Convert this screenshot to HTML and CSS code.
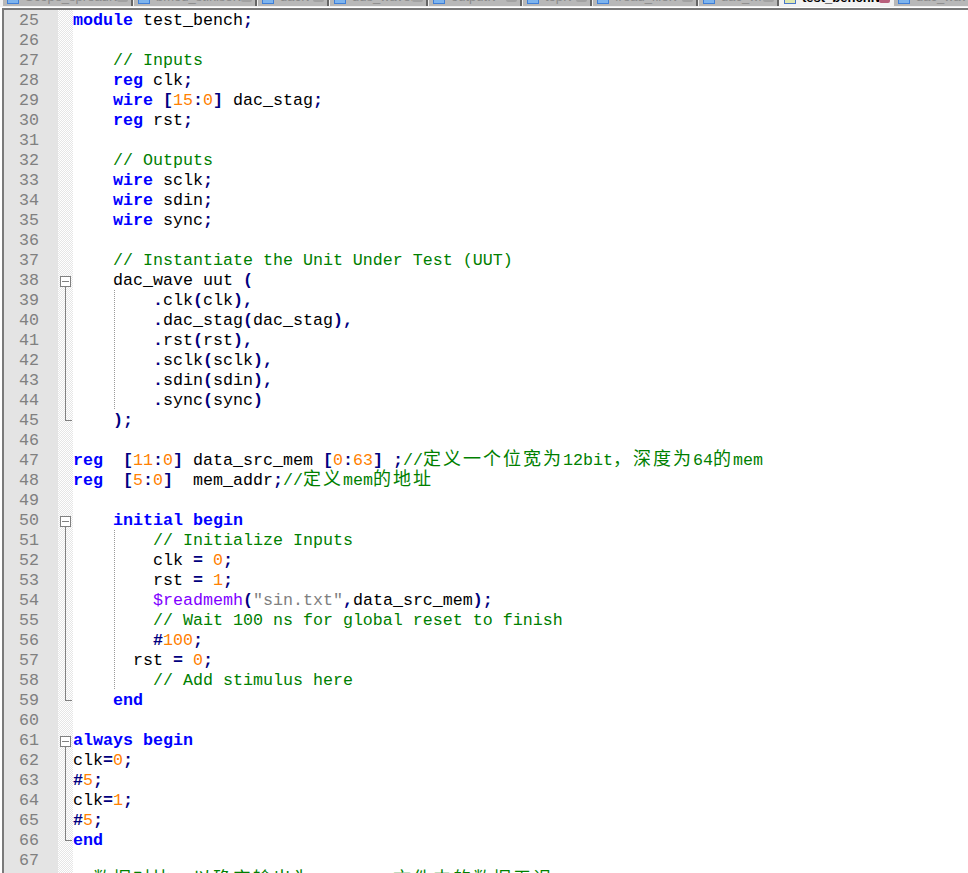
FILE: index.html
```html
<!DOCTYPE html>
<html lang="zh">
<head>
  <meta charset="UTF-8">
  <title>test_bench.v</title>
  <link rel="stylesheet" href="styles.css">
</head>
<body>
  <div class="tabs">
    <div class="tab"><i class="tab-icon"></i><span class="tab-name">Scope_spread.vhd</span><i class="tab-close"></i></div>
    <div class="tab"><i class="tab-icon"></i><span class="tab-name">bmod_st.xise.vhd</span><i class="tab-close"></i></div>
    <div class="tab"><i class="tab-icon"></i><span class="tab-name">dac.v</span><i class="tab-close"></i></div>
    <div class="tab"><i class="tab-icon"></i><span class="tab-name">dds_wave.v</span><i class="tab-close"></i></div>
    <div class="tab"><i class="tab-icon"></i><span class="tab-name">output.v</span><i class="tab-close"></i></div>
    <div class="tab"><i class="tab-icon"></i><span class="tab-name">top.v</span><i class="tab-close"></i></div>
    <div class="tab"><i class="tab-icon"></i><span class="tab-name">fread_file.v</span><i class="tab-close"></i></div>
    <div class="tab"><i class="tab-icon"></i><span class="tab-name">dac_wr.v</span><i class="tab-close"></i></div>
    <div class="tab active"><i class="tab-icon"></i><span class="tab-name">test_bench.v</span><i class="tab-close"></i></div>
    <div class="tab"><i class="tab-icon"></i><span class="tab-name">dac_wave.v</span></div>
  </div>

  <div class="editor">
    <div class="row"><span class="num">25</span><span class="fold"></span><span class="code"><b class="kw">module</b> test_bench<b class="op">;</b></span></div>
    <div class="row"><span class="num">26</span><span class="fold"></span><span class="code"></span></div>
    <div class="row"><span class="num">27</span><span class="fold"></span><span class="code">    <span class="cm">// Inputs</span></span></div>
    <div class="row"><span class="num">28</span><span class="fold"></span><span class="code">    <b class="kw">reg</b> clk<b class="op">;</b></span></div>
    <div class="row"><span class="num">29</span><span class="fold"></span><span class="code">    <b class="kw">wire</b> <b class="op">[</b><span class="n">15</span><b class="op">:</b><span class="n">0</span><b class="op">]</b> dac_stag<b class="op">;</b></span></div>
    <div class="row"><span class="num">30</span><span class="fold"></span><span class="code">    <b class="kw">reg</b> rst<b class="op">;</b></span></div>
    <div class="row"><span class="num">31</span><span class="fold"></span><span class="code"></span></div>
    <div class="row"><span class="num">32</span><span class="fold"></span><span class="code">    <span class="cm">// Outputs</span></span></div>
    <div class="row"><span class="num">33</span><span class="fold"></span><span class="code">    <b class="kw">wire</b> sclk<b class="op">;</b></span></div>
    <div class="row"><span class="num">34</span><span class="fold"></span><span class="code">    <b class="kw">wire</b> sdin<b class="op">;</b></span></div>
    <div class="row"><span class="num">35</span><span class="fold"></span><span class="code">    <b class="kw">wire</b> sync<b class="op">;</b></span></div>
    <div class="row"><span class="num">36</span><span class="fold"></span><span class="code"></span></div>
    <div class="row"><span class="num">37</span><span class="fold"></span><span class="code">    <span class="cm">// Instantiate the Unit Under Test (UUT)</span></span></div>
    <div class="row"><span class="num">38</span><span class="fold open"></span><span class="code">    dac_wave uut <b class="op">(</b></span></div>
    <div class="row"><span class="num">39</span><span class="fold line"></span><span class="code guide">        <b class="op">.</b>clk<b class="op">(</b>clk<b class="op">),</b></span></div>
    <div class="row"><span class="num">40</span><span class="fold line"></span><span class="code guide">        <b class="op">.</b>dac_stag<b class="op">(</b>dac_stag<b class="op">),</b></span></div>
    <div class="row"><span class="num">41</span><span class="fold line"></span><span class="code guide">        <b class="op">.</b>rst<b class="op">(</b>rst<b class="op">),</b></span></div>
    <div class="row"><span class="num">42</span><span class="fold line"></span><span class="code guide">        <b class="op">.</b>sclk<b class="op">(</b>sclk<b class="op">),</b></span></div>
    <div class="row"><span class="num">43</span><span class="fold line"></span><span class="code guide">        <b class="op">.</b>sdin<b class="op">(</b>sdin<b class="op">),</b></span></div>
    <div class="row"><span class="num">44</span><span class="fold line"></span><span class="code guide">        <b class="op">.</b>sync<b class="op">(</b>sync<b class="op">)</b></span></div>
    <div class="row"><span class="num">45</span><span class="fold close"></span><span class="code">    <b class="op">);</b></span></div>
    <div class="row"><span class="num">46</span><span class="fold"></span><span class="code"></span></div>
    <div class="row"><span class="num">47</span><span class="fold"></span><span class="code"><b class="kw">reg</b>  <b class="op">[</b><span class="n">11</span><b class="op">:</b><span class="n">0</span><b class="op">]</b> data_src_mem <b class="op">[</b><span class="n">0</span><b class="op">:</b><span class="n">63</span><b class="op">]</b> <b class="op">;</b><span class="cm">//<span class="zh">定义一个位宽为</span>12bit<span class="zh">，深度为</span>64<span class="zh">的</span>mem</span></span></div>
    <div class="row"><span class="num">48</span><span class="fold"></span><span class="code"><b class="kw">reg</b>  <b class="op">[</b><span class="n">5</span><b class="op">:</b><span class="n">0</span><b class="op">]</b>  mem_addr<b class="op">;</b><span class="cm">//<span class="zh">定义</span>mem<span class="zh">的地址</span></span></span></div>
    <div class="row"><span class="num">49</span><span class="fold"></span><span class="code"></span></div>
    <div class="row"><span class="num">50</span><span class="fold open"></span><span class="code">    <b class="kw">initial</b> <b class="kw">begin</b></span></div>
    <div class="row"><span class="num">51</span><span class="fold line"></span><span class="code guide">        <span class="cm">// Initialize Inputs</span></span></div>
    <div class="row"><span class="num">52</span><span class="fold line"></span><span class="code guide">        clk <b class="op">=</b> <span class="n">0</span><b class="op">;</b></span></div>
    <div class="row"><span class="num">53</span><span class="fold line"></span><span class="code guide">        rst <b class="op">=</b> <span class="n">1</span><b class="op">;</b></span></div>
    <div class="row"><span class="num">54</span><span class="fold line"></span><span class="code guide">        <span class="sys">$readmemh</span><b class="op">(</b><span class="str">"sin.txt"</span><b class="op">,</b>data_src_mem<b class="op">);</b></span></div>
    <div class="row"><span class="num">55</span><span class="fold line"></span><span class="code guide">        <span class="cm">// Wait 100 ns for global reset to finish</span></span></div>
    <div class="row"><span class="num">56</span><span class="fold line"></span><span class="code guide">        <b class="op">#</b><span class="n">100</span><b class="op">;</b></span></div>
    <div class="row"><span class="num">57</span><span class="fold line"></span><span class="code guide">      rst <b class="op">=</b> <span class="n">0</span><b class="op">;</b></span></div>
    <div class="row"><span class="num">58</span><span class="fold line"></span><span class="code guide">        <span class="cm">// Add stimulus here</span></span></div>
    <div class="row"><span class="num">59</span><span class="fold close"></span><span class="code">    <b class="kw">end</b></span></div>
    <div class="row"><span class="num">60</span><span class="fold"></span><span class="code"></span></div>
    <div class="row"><span class="num">61</span><span class="fold open"></span><span class="code"><b class="kw">always</b> <b class="kw">begin</b></span></div>
    <div class="row"><span class="num">62</span><span class="fold line"></span><span class="code">clk<b class="op">=</b><span class="n">0</span><b class="op">;</b></span></div>
    <div class="row"><span class="num">63</span><span class="fold line"></span><span class="code"><b class="op">#</b><span class="n">5</span><b class="op">;</b></span></div>
    <div class="row"><span class="num">64</span><span class="fold line"></span><span class="code">clk<b class="op">=</b><span class="n">1</span><b class="op">;</b></span></div>
    <div class="row"><span class="num">65</span><span class="fold line"></span><span class="code"><b class="op">#</b><span class="n">5</span><b class="op">;</b></span></div>
    <div class="row"><span class="num">66</span><span class="fold close"></span><span class="code"><b class="kw">end</b></span></div>
    <div class="row"><span class="num">67</span><span class="fold"></span><span class="code"></span></div>
    <div class="row"><span class="num">68</span><span class="fold"></span><span class="code"><span class="cm">//<span class="zh">数据对比，以确定输出为</span>mem_wave<span class="zh">文件中的数据无误</span></span></span></div>
  </div>
</body>
</html>
```

FILE: styles.css
```css
html, body {
  margin: 0;
  height: 100%;
  overflow: hidden;
  background: white;
}

/* tab strip, only the bottom of it is on screen */
.tabs {
  display: flex;
  height: 7px;
  padding-left: 3px;
  gap: 1px;
  overflow: hidden;
  background: #f0f0f0;
}
.tab {
  display: flex;
  flex: none;
  align-items: flex-end;
  box-sizing: border-box;
  height: 6px;
  padding: 0 3px 0 4px;
  overflow: hidden;
  background: #b8b8b8;
  border-right: 2px solid #666;
}
.tab:nth-child(1) { width: 130px; }
.tab:nth-child(2) { width: 123px; }
.tab:nth-child(3) { width: 71px; }
.tab:nth-child(4) { width: 98px; }
.tab:nth-child(5) { width: 93px; }
.tab:nth-child(6) { width: 69px; }
.tab:nth-child(7) { width: 105px; }
.tab:nth-child(8) { width: 80px; }
.tab:nth-child(9) { width: 113px; }
.tab:nth-child(10) { width: 80px; }
.tab-icon {
  flex: none;
  align-self: flex-start;
  box-sizing: border-box;
  width: 12px;
  height: 4px;
  background: #7db4ee;
  border: 1px solid #3f7fd8;
  border-top: none;
}
.tab-name {
  flex: 1;
  margin: 0 0 2px 6px;
  overflow: hidden;
  color: #8a8a8a;
  font: 13px/14px "Liberation Sans", sans-serif;
  white-space: nowrap;
}
.tab-close {
  flex: none;
  align-self: flex-start;
  width: 11px;
  height: 2px;
  background: #a2a2a2;
  border-radius: 0 0 2px 2px;
}
.tab.active {
  border-right: none;
  background: #f2f2f2;
  height: 7px;
}
.tab.active .tab-icon {
  background: #dfe8b0;
  border-color: #4a78c8;
}
.tab.active .tab-name {
  color: black;
  font-weight: bold;
}
.tab.active .tab-close {
  background: #b8607c;
  height: 3px;
}

.editor {
  height: 866px;
  margin-top: 1px;
  margin-left: 2px;
  overflow: hidden;
  border-top: 2px solid #7a7a7a;
  border-left: 2px solid #7a7a7a;
}

.row {
  display: flex;
  height: 20px;
}
.num {
  flex: none;
  box-sizing: border-box;
  width: 54px;
  padding-right: 19px;
  background: #e4e4e4;
  color: #808080;
  font: 16.67px/22px "Liberation Mono", monospace;
  text-align: right;
}
.fold {
  position: relative;
  flex: none;
  width: 15px;
  background: repeating-conic-gradient(#e6e6e6 0 25%, white 0 50%) 0 0 / 2px 2px;
}
.fold.open::before {
  content: "";
  position: absolute;
  left: 2px;
  top: 6px;
  z-index: 1;
  box-sizing: border-box;
  width: 11px;
  height: 11px;
  background: linear-gradient(#808080, #808080) center / 7px 1px no-repeat white;
  border: 1px solid #808080;
}
.fold.open::after {
  content: "";
  position: absolute;
  left: 7px;
  top: 16px;
  width: 1px;
  height: 4px;
  background: #808080;
}
.fold.line::before {
  content: "";
  position: absolute;
  left: 7px;
  top: 0;
  width: 1px;
  height: 20px;
  background: #808080;
}
.fold.close::before {
  content: "";
  position: absolute;
  left: 7px;
  top: 0;
  box-sizing: border-box;
  width: 7px;
  height: 11px;
  border-left: 1px solid #808080;
  border-bottom: 1px solid #808080;
}

.code {
  flex: 1;
  color: black;
  font: 16.67px/22px "Liberation Mono", monospace;
  white-space: pre;
}
.guide {
  background: repeating-linear-gradient(#999 0 1px, transparent 1px 2px) 41px 0 / 1px 100% no-repeat;
}
.kw {
  color: #0000ff;
  font-weight: bold;
}
.op {
  color: #000080;
  font-weight: bold;
}
.n {
  color: #ff8000;
}
.cm {
  color: #008000;
}
.str {
  color: #808080;
}
.sys {
  color: #8000ff;
}
.zh {
  font-family: "Noto Sans CJK SC", sans-serif;
  font-size: 18px;
  line-height: 0;
  letter-spacing: 2px;
}
```
